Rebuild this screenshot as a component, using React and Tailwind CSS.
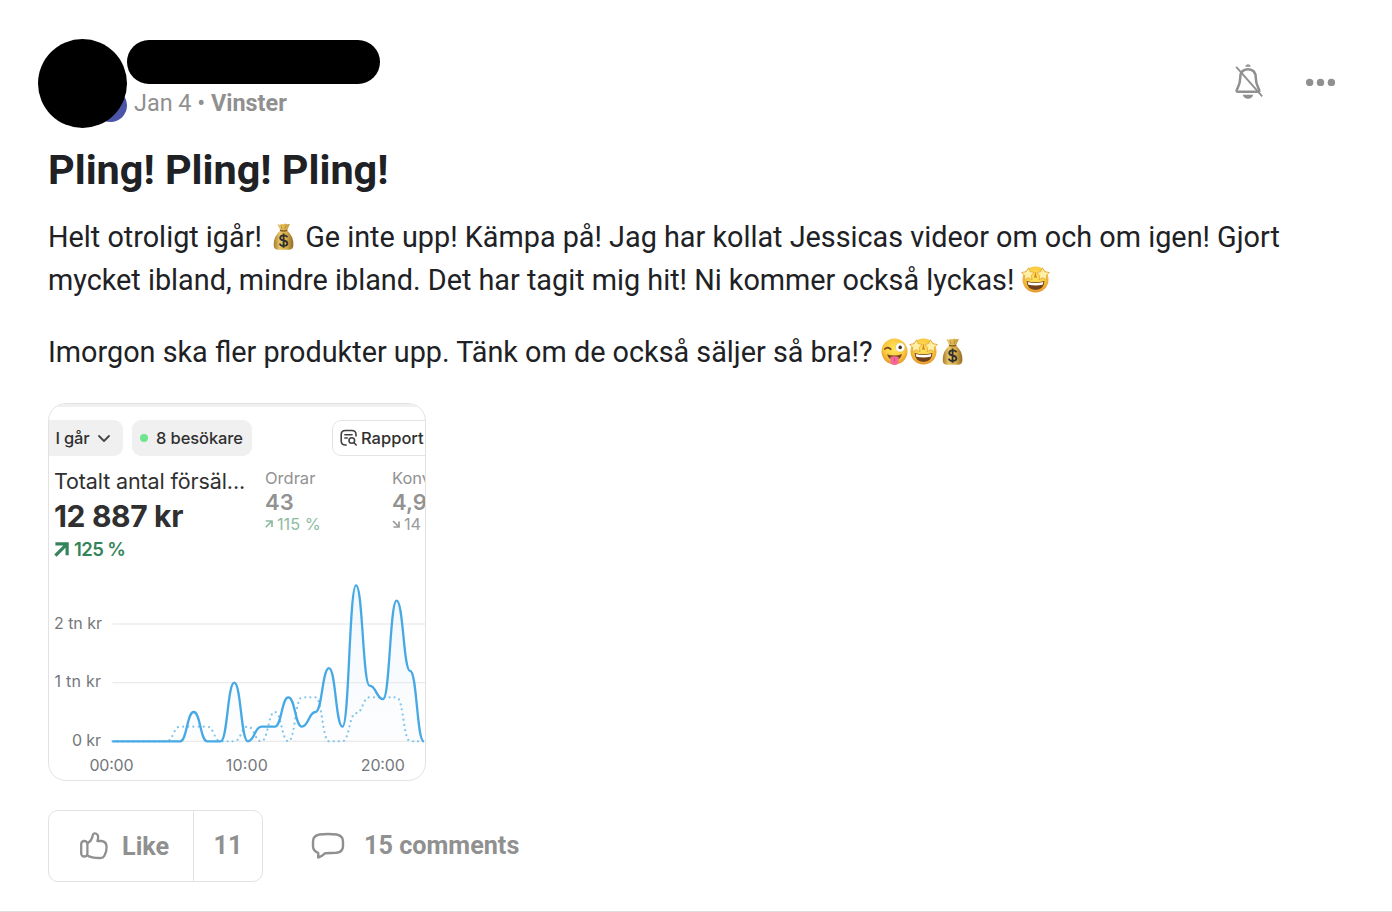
const sales = [0, 0, 0, 0, 0, 0, 0.5, 0, 0, 1, 0, 0.25, 0.25, 0.75, 0.25, 0.5, 1.25, 0.25, 2.66, 0.95, 0.72, 2.4, 1.2, 0]
const previous = [0, 0, 0, 0, 0, 0.25, 0.25, 0.25, 0, 0, 0.25, 0, 0.5, 0, 0.75, 0.75, 0, 0, 0.48, 0.75, 0.75, 0.75, 0, 0]

const STEP = 13.53
const X0 = 63.5
const Y0 = 167.3

function curve(values) {
  const px = i => X0 + i * STEP
  const py = v => Y0 - v * 58.6
  return values
    .map((v, i) => {
      if (i === 0) return `M${px(0)} ${py(v)}`
      const mid = (px(i - 1) + px(i)) / 2
      return `C${mid} ${py(values[i - 1])} ${mid} ${py(v)} ${px(i)} ${py(v)}`
    })
    .join(' ')
}

function MoneyBag() {
  return (
    <svg viewBox="0 0 29 29" className="inline-block h-[29px] w-[29px] align-[-4px]" role="img" aria-label="money bag">
      <defs>
        <linearGradient id="bag" x1="0" x2="1">
          <stop offset="0" stopColor="#a37b30" />
          <stop offset=".3" stopColor="#e8c566" />
          <stop offset=".65" stopColor="#d6ac48" />
          <stop offset="1" stopColor="#936b28" />
        </linearGradient>
      </defs>
      <path d="M8.5 2.2 Q11 3.4 12.5 1.7 Q14.5 3 16.2 1.5 Q18 3 21 1.8 L18 8.5 Q24.7 14 24.4 23 Q24.2 27.5 20.5 27.7 H8.5 Q4.8 27.5 4.7 23 Q4.6 14 11.4 8.5Z" fill="url(#bag)" />
      <path d="M11 8.2 Q14.5 9.7 18.3 8.2" stroke="#896022" strokeWidth="1.5" fill="none" />
      <path d="M12 3.5 L13 7 M17 3.4 L16 7" stroke="#a77e32" strokeWidth=".7" />
      <path d="M18.3 15.2 Q17.7 13.3 14.6 13.3 Q11.2 13.4 11.2 16 Q11.2 18 14.6 18.5 Q18.4 19 18.4 21.5 Q18.2 24 14.7 24 Q11.3 24 10.8 21.6 M14.6 11.5 V25.8" stroke="#30312e" strokeWidth="1.8" fill="none" />
    </svg>
  )
}

function FaceGradient({ id }) {
  return (
    <defs>
      <radialGradient id={id} cx=".5" cy=".4" r=".6">
        <stop offset="0" stopColor="#fee75a" />
        <stop offset=".65" stopColor="#fac940" />
        <stop offset="1" stopColor="#e3952a" />
      </radialGradient>
    </defs>
  )
}

function StarStruck() {
  return (
    <svg viewBox="0 0 29 29" className="inline-block h-[29px] w-[29px] align-[-4px]" role="img" aria-label="star-struck">
      <FaceGradient id="star-face" />
      <circle cx="14.5" cy="14.5" r="13" fill="url(#star-face)" />
      <path d="M5.5 16 Q14.5 18.6 23.5 16 Q22.8 24.8 14.5 24.9 Q6.3 24.8 5.5 16Z" fill="#71401b" />
      <path d="M6.7 17 Q14.5 19 22.3 17 L21.6 19.7 Q14.5 21.3 7.4 19.7Z" fill="#fff" />
      <path d="M13 12.8 L14.4 6.5 L16 12.8" fill="#d58a24" />
      <g fill="#fff0a6" stroke="#e2a23a" strokeWidth=".8" strokeLinejoin="round">
        <path d="M7.6 2.8 L9.1 6.6 L13.2 7.5 L10.3 10.4 L11.1 14.8 L7.3 12.8 L3.2 14.9 L3.8 10.5 L.5 7.5 L5.1 6.7Z" />
        <path d="M21.4 2.8 L19.9 6.6 L15.8 7.5 L18.7 10.4 L17.9 14.8 L21.7 12.8 L25.8 14.9 L25.2 10.5 L28.5 7.5 L23.9 6.7Z" />
      </g>
    </svg>
  )
}

function WinkTongue() {
  return (
    <svg viewBox="0 0 29 29" className="inline-block h-[29px] w-[29px] align-[-4px]" role="img" aria-label="winking face with tongue">
      <FaceGradient id="wink-face" />
      <circle cx="14.5" cy="14.5" r="13" fill="url(#wink-face)" />
      <path d="M7 17.3 Q14.5 20 22 17 Q20.8 23 14.5 23 Q8.5 23 7 17.3Z" fill="#7a471d" />
      <path d="M10.5 19.9 Q14.5 18.7 18.5 19.9 V24 Q18.3 28 14.5 28 Q10.7 28 10.5 24Z" fill="#f5679d" />
      <path d="M14.5 20.8 V24.5" stroke="#d83d79" strokeWidth=".8" />
      <path d="M4.8 12 Q7.8 9 10.8 12.3" stroke="#754516" strokeWidth="1.7" strokeLinecap="round" fill="none" />
      <circle cx="20.2" cy="10.4" r="4.7" fill="#fff" stroke="#ddb44c" strokeWidth=".5" />
      <circle cx="20.2" cy="10.4" r="1.8" fill="#45372d" />
    </svg>
  )
}

function BellOff() {
  return (
    <svg width="30" height="38" viewBox="0 0 30 38" fill="none" stroke="#909090">
      <path d="M15 6.2 C9.7 6.2 7.2 9.8 7.2 15 C7.2 20.5 5.9 22.7 4.3 25.8 C3.2 28 3.3 28.7 5.2 28.7 H24.8 C26.7 28.7 26.8 28 25.7 25.8 C24.1 22.7 22.8 20.5 22.8 15 C22.8 9.8 20.3 6.2 15 6.2Z" strokeWidth="2.5" />
      <path d="M12.2 3.7 Q12.5 1.2 15 1.2 Q17.5 1.2 17.8 3.7Z M9.7 31.7 H20.3 Q19 35.7 15 35.7 Q11 35.7 9.7 31.7Z" fill="#909090" stroke="none" />
      <path d="M3.2 3.8 L29.2 33.3" strokeWidth="1.9" />
    </svg>
  )
}

function Trend({ down, className }) {
  return (
    <svg viewBox="0 0 16 16" className={className} fill="none" stroke="currentColor" strokeWidth="3.4">
      {down ? <path d="M2 2 L14 14 M14 3 V14 H3" /> : <path d="M1.5 14.5 L14 2 M1.5 2 H14 V14" />}
    </svg>
  )
}

function SalesChart() {
  return (
    <svg width="376" height="205" viewBox="0 0 376 205" className="font-['Inter',sans-serif]">
      <defs>
        <linearGradient id="area" x1="0" x2="0" y1="0" y2="1">
          <stop offset="0" stopColor="#f1f8fd" />
          <stop offset="1" stopColor="#fdfdfe" />
        </linearGradient>
      </defs>
      <path d={`${curve(sales)} L${X0} ${Y0}Z`} fill="url(#area)" />
      <path d="M63.5 50 H376 M63.5 108.7 H376 M63.5 167.3 H376" stroke="#e5e5e6" />
      <path d={curve(previous)} fill="none" stroke="#82c6e9" strokeWidth="2.3" strokeLinecap="round" strokeDasharray="0 5.2" />
      <path d={curve(sales)} fill="none" stroke="#46a8e5" strokeWidth="2.3" strokeLinejoin="round" />
      <g fill="#74777c" fontSize="16">
        <text x="5" y="54.8" textLength="48">2 tn kr</text>
        <text x="5.5" y="113.2" textLength="46.5">1 tn kr</text>
        <text x="23" y="172" textLength="29">0 kr</text>
        <text x="40.5" y="197" textLength="44">00:00</text>
        <text x="176.8" y="197" textLength="42">10:00</text>
        <text x="311.8" y="197" textLength="44">20:00</text>
      </g>
    </svg>
  )
}

function SalesCard() {
  return (
    <div className="flex h-[378px] w-[378px] flex-col overflow-hidden rounded-[18px] border border-[#e2e2e2] bg-white font-['Inter',sans-serif] whitespace-nowrap text-[#303030]">
      <div className="h-[3px] shrink-0 bg-[#f0f0f0]" />
      <div className="mt-[13px] flex h-9 shrink-0 items-center text-[16.5px] font-medium">
        <div className="flex h-9 w-[73.5px] shrink-0 items-center rounded-r-[9px] bg-[#f0f0f0] pl-[6.5px]">
          <span className="w-[35px] tracking-[-0.2px]">I går</span>
          <svg width="14" height="14" viewBox="0 0 14 14" fill="none" stroke="#444" strokeWidth="1.8" strokeLinecap="round" strokeLinejoin="round" className="ml-[6px]"><path d="M2 5 L7 10 L12 5" /></svg>
        </div>
        <div className="ml-[9px] flex h-9 w-[120.5px] shrink-0 items-center rounded-[9px] bg-[#f0f0f0] pl-[8.5px]">
          <div className="mr-2 h-2 w-2 rounded-full bg-[#6ce58e]" />
          <span className="tracking-[-0.1px]">8 besökare</span>
        </div>
        <div className="ml-[80px] flex h-9 w-[110px] shrink-0 items-center rounded-[9px] border border-[#e4e4e4] pl-[7px]">
          <svg width="18" height="18" viewBox="0 0 18 18" fill="none" stroke="#404040" strokeWidth="1.6" strokeLinecap="round" className="mr-[3px]">
            <path d="M6.2 16 H5.5 Q1.2 16 1.2 11.7 V5.7 Q1.2 1.5 5.5 1.5 H11.7 Q16 1.5 16 5.5 V7 M4.9 5.7 H12.1 M4.9 9 H7.2" />
            <circle cx="11.8" cy="11.5" r="2.8" />
            <path d="M14 13.8 L16.2 16" />
          </svg>
          Rapport
        </div>
      </div>
      <div className="flex h-[114px] shrink-0 pl-[5px]">
        <div className="w-[211px] shrink-0 pt-2.5">
          <div className="h-[30px] text-[21.5px] leading-[30px] tracking-[-0.12px]">Totalt antal försäl...</div>
          <div className="h-10 text-[30px] leading-10 font-bold tracking-[-0.35px]">12 887 kr</div>
          <div className="flex h-[26px] items-center gap-[5px] text-[18.5px] font-semibold tracking-[-0.6px] text-[#34845b]">
            <Trend className="h-[15px] w-[15px]" />
            125 %
          </div>
        </div>
        <div className="w-[127px] shrink-0 pt-3 text-[#929292]">
          <div className="h-5 text-[16.5px] leading-5">Ordrar</div>
          <div className="h-7 text-[22px] leading-7 font-semibold">43</div>
          <div className="flex h-4 items-center gap-1 text-[16.3px] text-[#8dbba1]">
            <Trend className="h-2 w-2" />
            115 %
          </div>
        </div>
        <div className="shrink-0 pt-3 text-[#929292]">
          <div className="h-5 text-[16.5px] leading-5">Konv</div>
          <div className="h-7 text-[22px] leading-7 font-semibold">4,9</div>
          <div className="flex h-4 items-center gap-1 text-[16.3px] text-[#9b9b9b]">
            <Trend down className="h-2 w-2" />
            14
          </div>
        </div>
      </div>
      <div className="mt-1 shrink-0">
        <SalesChart />
      </div>
    </div>
  )
}

export default function App() {
  return (
    <div className="flex h-[912px] w-[1392px] flex-col border-b border-[#dedede] bg-white pl-12 font-['Roboto',sans-serif] text-[#202124]">
      <header className="mt-[38px] -ml-2.5 flex h-[92px]">
        <div className="relative h-[90px] w-[89px]">
          <div className="absolute top-[51px] left-[56px] h-[33px] w-[33px] rounded-full bg-[#4b55a7]" />
          <div className="absolute top-[1px] left-0 h-[89px] w-[89px] rounded-full bg-black" />
        </div>
        <div>
          <div className="mt-[2px] h-[43.5px] w-[253px] rounded-full bg-black" />
          <div className="mt-[5.5px] ml-[7px] text-[23.4px] leading-[28px] text-[#909090]">
            Jan 4 • <b className="font-bold">Vinster</b>
          </div>
        </div>
        <div className="mt-[25px] ml-auto flex h-[38px] items-center pr-[56px]">
          <BellOff />
          <svg width="30" height="8" viewBox="0 0 30 8" fill="#909090" className="ml-[43px]">
            <circle cx="3.6" cy="4.4" r="3.7" />
            <circle cx="14.5" cy="4.4" r="3.7" />
            <circle cx="25.4" cy="4.4" r="3.7" />
          </svg>
        </div>
      </header>
      <h1 className="mt-[14px] h-[54px] text-[41.4px] leading-[52px] font-bold">Pling! Pling! Pling!</h1>
      <div className="mt-[18px] flex flex-col gap-[28.8px] text-[28.8px] leading-[43.2px] whitespace-nowrap">
        <p>
          Helt otroligt igår! <MoneyBag /> Ge inte upp! Kämpa på! Jag har kollat Jessicas videor om och om igen! Gjort
          <br />
          mycket ibland, mindre ibland. Det har tagit mig hit! Ni kommer också lyckas! <StarStruck />
        </p>
        <p>
          Imorgon ska fler produkter upp. Tänk om de också säljer så bra!? <WinkTongue /><StarStruck /><MoneyBag />
        </p>
      </div>
      <div className="mt-[29px]">
        <SalesCard />
      </div>
      <div className="mt-[29px] flex h-[72px] items-center text-[25.2px] font-bold text-[#909090]">
        <div className="flex h-[72px] w-[215px] rounded-[10px] border border-[#e2e2e2]">
          <div className="flex w-[145px] items-center border-r border-[#e2e2e2] pl-[30px]">
            <svg width="30" height="30" viewBox="0 0 30 30" fill="none" stroke="#909090" strokeWidth="2.3" strokeLinejoin="round">
              <rect x="2.2" y="10" width="6.2" height="15.5" rx="3" />
              <path d="M8.4 12.2 Q13 9.5 13.7 4.5 Q14.2 1.8 16.8 2.5 Q20.5 3.8 18.4 10 H22.5 Q27.5 10.5 27.6 16 Q27.8 20.5 25.3 25 Q24 27.3 20.5 27 Q12.5 26.8 8.4 24.4" />
            </svg>
            <span className="ml-[13px]">Like</span>
          </div>
          <div className="flex flex-1 items-center justify-center pb-px">11</div>
        </div>
        <svg width="34" height="28" viewBox="0 0 34 28" fill="none" stroke="#909090" strokeWidth="2.4" strokeLinejoin="round" className="ml-12">
          <path d="M7.2 25.5 V20.8 Q2 19 2 14 V9.5 Q2 3.5 8.5 2.5 Q17 1.5 25.5 2.5 Q32 3.5 32 9.5 V14 Q32 20 25.5 20.8 L14.3 21.2 Q10.5 24.8 7.2 25.5Z" />
        </svg>
        <span className="ml-[19px] pb-px">15 comments</span>
      </div>
    </div>
  )
}
